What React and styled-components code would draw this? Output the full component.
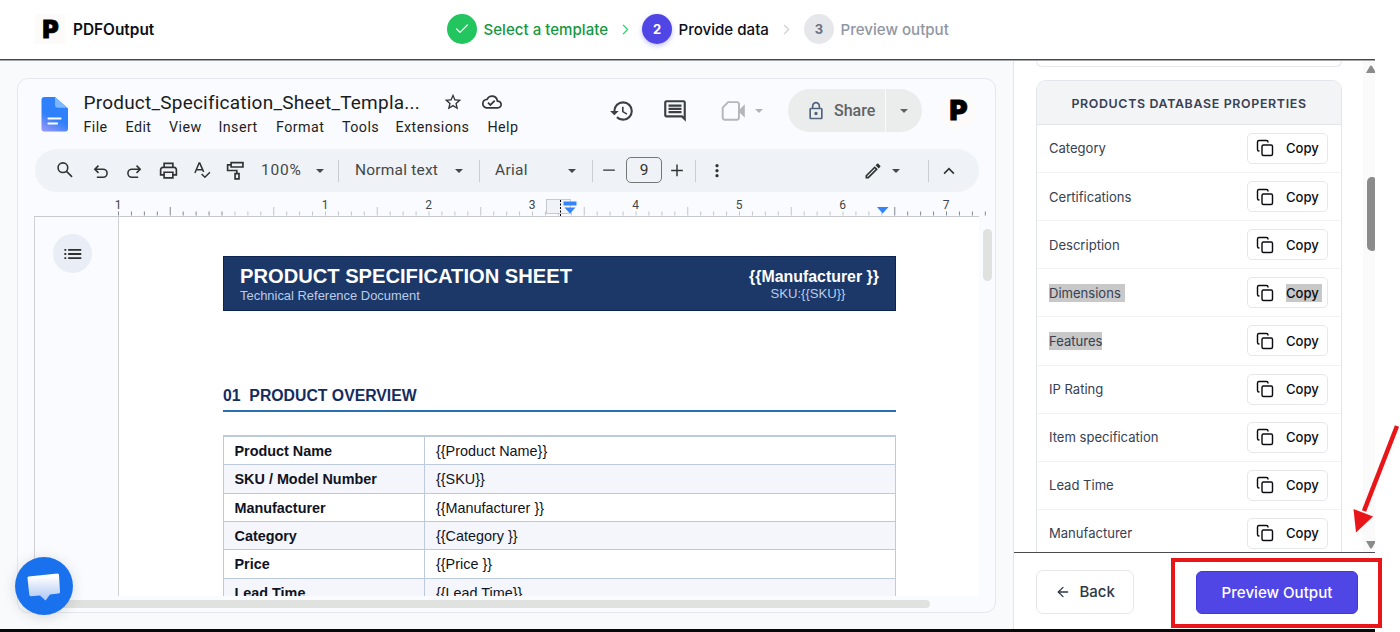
import React, { Fragment } from "react"
import styled, { createGlobalStyle } from "styled-components"
import { ArrowLeft, Check, ChevronRight, Copy } from "lucide-react"
import {
  MdHistory,
  MdOutlineCloudDone,
  MdOutlineComment,
  MdOutlineEdit,
  MdOutlineLock,
  MdStarBorder,
} from "react-icons/md"

const GlobalStyle = createGlobalStyle`
  * {
    box-sizing: border-box;
  }

  body {
    margin: 0;
    overflow: hidden;
    background: #fff;
    font-family: Inter, "Liberation Sans", sans-serif;
  }
`

const Page = styled.div`
  position: relative;
  width: 1400px;
  height: 632px;
  overflow: hidden;
`

const Shell = styled.div`
  display: flex;
  flex-direction: column;
  width: 1375px;
  height: 632px;
  border-bottom: 3px solid #08080a;
`

/* ---------- header ---------- */

const Header = styled.header`
  display: flex;
  align-items: center;
  flex: none;
  height: 61px;
  padding: 0 0 2px 35px;
  border-bottom: 1px solid #a5a6a8;
  box-shadow: inset 0 -1px 0 #46474b;
`

const Brand = styled.div`
  display: flex;
  align-items: center;
  width: 412px;
  font-size: 15.4px;
  font-weight: 600;
  color: #0b0f19;
`

const Logo = styled.div`
  display: flex;
  align-items: center;
  justify-content: center;
  width: ${props => props.size}px;
  height: ${props => props.size}px;
  padding: 1px 0 0 1px;
  border-radius: ${props => (props.round ? "50%" : "0")};
  background: #fcfbf9;
  color: #000;
  font: 900 ${props => props.glyph}px/1 Inter, sans-serif;
  -webkit-text-stroke: 0.9px #000;
`

const BrandName = styled.span`
  margin-left: 8px;
`

const Steps = styled.div`
  display: flex;
  align-items: center;
  font-size: 15.1px;
  font-weight: 500;

  > svg {
    flex: none;
  }
`

const StepDot = styled.div`
  display: flex;
  align-items: center;
  justify-content: center;
  flex: none;
  width: 30px;
  height: 30px;
  border-radius: 50%;
  background: ${props => props.bg};
  color: ${props => props.ink};
  font-size: 13px;
  font-weight: 700;
  box-shadow: ${props => (props.active ? "0 2px 5px #c3c1f8" : "none")};
`

const StepName = styled.span`
  width: ${props => props.width}px;
  margin-left: 6.5px;
  color: ${props => props.ink};
  white-space: nowrap;
`

/* ---------- document pane ---------- */

const Body = styled.main`
  display: flex;
  flex: 1;
  min-height: 0;
`

const DocPane = styled.section`
  width: 1014px;
  padding: 17px 17px 0;
  background: #f9fafc;
  border-right: 1px solid #e3e5e9;
`

const DocCard = styled.div`
  display: flex;
  flex-direction: column;
  width: 979px;
  height: 535px;
  border: 1px solid #e4e7eb;
  border-radius: 11px;
  background: #f9fbfe;
  overflow: hidden;
  font-family: Roboto, "Liberation Sans", sans-serif;
`

const DocHead = styled.div`
  display: flex;
  flex: none;
  height: 70px;
  padding-left: 23px;
`

const DocIcon = styled.svg`
  display: block;
  flex: none;
  margin-top: 18px;
`

const DocTitles = styled.div`
  flex: none;
  width: 523px;
  padding-left: 15.5px;
  color: #1b1c1e;
`

const TitleRow = styled.div`
  display: flex;
  align-items: center;
  height: 26px;
  margin-top: 10px;
`

const DocTitle = styled.span`
  width: 359px;
  font-size: 19px;
  letter-spacing: 0.22px;
  white-space: nowrap;
`

const CloudSlot = styled.span`
  display: flex;
  margin-left: 19px;
`

const Menus = styled.div`
  display: flex;
  margin-top: 1px;
  font-size: 14.3px;
  line-height: 22px;
  color: #1f1f1f;
`

const MenuItem = styled.span`
  width: ${props => props.width}px;
  white-space: nowrap;
  letter-spacing: 0.42px;
`

const HeadTools = styled.div`
  display: flex;
  align-items: center;
  flex: none;
  height: 63px;
  color: #3c4043;
`

const ToolSlot = styled.div`
  display: flex;
  align-items: center;
  justify-content: ${props => (props.start ? "flex-start" : "center")};
  flex: none;
  width: ${props => props.width}px;
  padding-left: ${props => props.inset || 0}px;
  white-space: nowrap;

  svg {
    flex: none;
  }
`

const Caret = styled.span`
  width: 0;
  height: 0;
  border: 4.5px solid transparent;
  border-top-color: ${props => props.ink || "#444746"};
  border-bottom: 0;
`

const ShareButton = styled.div`
  display: flex;
  align-items: center;
  width: 134px;
  height: 43px;
  margin-left: 25px;
  border-radius: 22px;
  background: #ebecec;
  color: #5f6368;
  font-size: 16px;
  font-weight: 500;
`

const ShareMain = styled.div`
  display: flex;
  align-items: center;
  gap: 8px;
  width: 98px;
  height: 43px;
  padding-left: 18px;
  border-right: 1px solid #f9fbfe;
`

const Toolbar = styled.div`
  display: flex;
  align-items: center;
  flex: none;
  width: 944px;
  height: 43px;
  margin-left: 17px;
  padding-left: 11px;
  border-radius: 22px;
  background: #eff3f8;
  color: #303332;
  font-size: 15.5px;
`

const ToolLabel = styled(ToolSlot)`
  justify-content: flex-start;
  padding-bottom: 2px;
  color: #444746;
  letter-spacing: ${props => props.spacing || 0}px;
`

const Rule = styled.span`
  flex: none;
  width: 1px;
  height: 22px;
  background: #c9ccd0;
`

const SizeBox = styled.span`
  display: flex;
  align-items: center;
  justify-content: center;
  flex: none;
  width: 36px;
  height: 26px;
  margin-bottom: 2px;
  border: 1px solid #747775;
  border-radius: 5px;
`

const Ruler = styled.svg`
  display: block;
  flex: none;
  margin-left: 16px;
  font: 12px Roboto, sans-serif;
  fill: #444746;
`

const Workspace = styled.div`
  display: flex;
  flex: none;
  height: 379px;
  margin-left: 16px;
`

const OutlineRail = styled.div`
  width: 84px;
  padding: 17px 0 0 18px;
  border-left: 1px solid #cfd1d4;
`

const OutlineButton = styled.div`
  display: flex;
  align-items: center;
  justify-content: center;
  width: 39px;
  height: 39px;
  border-radius: 50%;
  background: #e9eef6;
  color: #2c2f2e;
`

const Paper = styled.div`
  width: 861px;
  height: 379px;
  padding: 39px 0 0 104px;
  overflow: hidden;
  border-left: 1px solid #cfd1d4;
  background: #fff;
  font-family: "Liberation Sans", Arial, sans-serif;
`

const ScrollY = styled.div`
  width: 9px;
  height: 52px;
  margin: 12px 0 0 4px;
  border-radius: 5px;
  background: #e0e2e0;
`

const ScrollX = styled.div`
  flex: none;
  width: 895px;
  height: 8px;
  margin: 4px 0 0 17px;
  border-radius: 4px;
  background: #e0e2e0;
`

const Banner = styled.div`
  display: flex;
  justify-content: space-between;
  width: 673px;
  height: 55px;
  padding: 8px 16px 0;
  border: 1px solid #0d2352;
  background: #1b3869;
  color: #fff;
`

const BannerTitle = styled.div`
  font-size: 20.15px;
  font-weight: 700;
  line-height: 23px;
  white-space: nowrap;
`

const BannerSub = styled.div`
  font-size: 12.95px;
  line-height: 15px;
  color: #bccce6;
`

const BannerRight = styled.div`
  width: 130px;
  text-align: center;
  white-space: nowrap;
  font-size: 15.9px;
  font-weight: 700;
  line-height: 23px;

  ${BannerSub} {
    margin-top: -2px;
    padding-right: 12px;
    font-size: 13.1px;
    font-weight: 400;
  }
`

const SectionTitle = styled.h2`
  width: 673px;
  margin: 75px 0 23px;
  padding-bottom: 5px;
  border-bottom: 2px solid #2a6fb0;
  color: #152c61;
  font-size: 15.8px;
  font-weight: 700;
  line-height: 19px;
  white-space: pre;
`

const SpecTable = styled.div`
  width: 673px;
  border: 1px solid #bccadc;
  border-top-width: 2px;
`

const SpecRow = styled.div`
  display: grid;
  grid-template-columns: 201px 1fr;
  height: 28.35px;
  border-bottom: 1px solid #bccadc;
  background: ${props => (props.shaded ? "#f4f6fb" : "#fff")};
  font-size: 14.4px;
  line-height: 28.5px;
  color: #101323;
`

const SpecName = styled.div`
  padding-left: 10.5px;
  border-right: 1px solid #bccadc;
  font-weight: 700;
`

const SpecValue = styled.div`
  padding-left: 11px;
`

/* ---------- properties pane ---------- */

const SidePane = styled.aside`
  display: flex;
  flex-direction: column;
  width: 361px;
`

const SideScroll = styled.div`
  display: flex;
  justify-content: space-between;
  height: 492px;
  overflow: hidden;
  border-bottom: 1px solid #4b4c50;
`

const Cards = styled.div`
  width: 306px;
  margin-left: 22px;
`

const PrevCard = styled.div`
  height: 6px;
  border: 1px solid #e5e7eb;
  border-top: 0;
  border-radius: 0 0 8px 8px;
`

const PropsCard = styled.div`
  margin-top: 13px;
  border: 1px solid #e2e5ea;
  border-radius: 10px 10px 0 0;
`

const PropsTitle = styled.div`
  height: 43.8px;
  border-bottom: 1px solid #e2e5ea;
  border-radius: 9px 9px 0 0;
  background: #f3f4f6;
  color: #374151;
  font-size: 12.4px;
  font-weight: 600;
  line-height: 46px;
  letter-spacing: 0.66px;
  text-align: center;
`

const PropRow = styled.div`
  display: flex;
  align-items: center;
  justify-content: space-between;
  height: 48.15px;
  padding: 0 13px 0 12px;
  border-bottom: 1px solid #f1f2f5;
  color: #374151;
  font-size: 13.05px;
`

const Mark = styled.span`
  padding-right: ${props => props.trail || 0}px;
  line-height: 18px;
  background: ${props => (props.on ? "#c8c8c8" : "none")};
`

const CopyButton = styled.div`
  display: flex;
  align-items: center;
  width: 81px;
  height: 31px;
  padding-left: 8px;
  border: 1px solid #e5e7eb;
  border-radius: 5px;
  background: #fff;
  color: #0b0c10;
  font-weight: 500;

  svg {
    margin-right: 12px;
  }
`

const PaneScrollbar = styled.div`
  display: flex;
  flex-direction: column;
  align-items: flex-end;
  width: 12px;
  background: #fafafa;
`

const ScrollArrow = styled.svg`
  flex: none;
  margin-top: ${props => props.gap}px;
`

const ScrollThumb = styled.div`
  flex: none;
  width: 8px;
  height: 74px;
  margin-top: 104px;
  border-radius: 5px 2px 2px 5px;
  background: #8b8b8b;
`

const SideFooter = styled.div`
  display: flex;
  justify-content: space-between;
  padding: 17px 17px 0 22px;
`

const BackButton = styled.div`
  display: flex;
  align-items: center;
  gap: 8.5px;
  width: 98px;
  height: 44px;
  padding: 0 0 1px 18px;
  border: 1px solid #e5e7eb;
  border-radius: 7px;
  color: #2d3748;
  font-size: 15px;
  font-weight: 500;
`

const PreviewButton = styled.div`
  width: 162px;
  height: 43px;
  margin-top: 0.5px;
  border: 1px solid #4038dc;
  border-radius: 6px;
  background: #4f46e5;
  color: #fff;
  font-size: 15.1px;
  font-weight: 500;
  line-height: 41px;
  text-align: center;
`

/* ---------- overlays ---------- */

const ChatBubble = styled.div`
  position: absolute;
  left: 15px;
  top: 557px;
  width: 58px;
  height: 58px;
  border-radius: 50%;
  background: #1a71ee;
  box-shadow: 0 2px 14px rgba(0, 0, 0, 0.14);
`

const Callout = styled.div`
  position: absolute;
  left: 1171px;
  top: 558px;
  width: 211px;
  height: 70px;
  border: 4.5px solid #e81519;
`

const CalloutArrow = styled.svg`
  position: absolute;
  left: 1345px;
  top: 420px;
`

const menus = [
  ["File", 42],
  ["Edit", 43.5],
  ["View", 49.5],
  ["Insert", 57.5],
  ["Format", 66],
  ["Tools", 53.5],
  ["Extensions", 92],
  ["Help", 40],
]

const specs = [
  ["Product Name", "{{Product Name}}"],
  ["SKU / Model Number", "{{SKU}}"],
  ["Manufacturer", "{{Manufacturer }}"],
  ["Category", "{{Category }}"],
  ["Price", "{{Price }}"],
  ["Lead Time", "{{Lead Time}}"],
]

const properties = [
  { name: "Category" },
  { name: "Certifications" },
  { name: "Description" },
  { name: "Dimensions", marked: true, trail: 4, copyMarked: true },
  { name: "Features", marked: true },
  { name: "IP Rating" },
  { name: "Item specification" },
  { name: "Lead Time" },
  { name: "Manufacturer" },
]

// Outline icon on a 24 unit grid
const LineIcon = ({ size = 20, weight = 2, children }) => (
  <svg
    width={size}
    height={size}
    viewBox="0 0 24 24"
    fill="none"
    stroke="currentColor"
    strokeWidth={weight}
  >
    {children}
  </svg>
)

const INCH = 103.5
const RULER_ZERO = 188

const DocRuler = () => {
  const ticks = Array.from({ length: 68 }, (_, i) => i)
  const labels = [-1, 1, 2, 3, 4, 5, 6, 7]

  return (
    <Ruler width="955" height="25" viewBox="0 0 955 25">
      {ticks.map(i => {
        const x = RULER_ZERO - INCH + (i * INCH) / 8
        return (
          <line
            key={i}
            x1={x}
            x2={x}
            y1={i % 8 === 4 ? 15 : 19.5}
            y2="23.5"
            stroke={i <= 8 || i >= 60 ? "#85888b" : "#c2c5c8"}
          />
        )
      })}
      <path d="M0 24.5H945" stroke="#c7c9cc" />
      {labels.map(n => (
        <text key={n} x={RULER_ZERO + n * INCH - 0.5} y="17" textAnchor="middle">
          {Math.abs(n)}
        </text>
      ))}
      <rect x="512.5" y="7.5" width="24" height="14" fill="#f0f3f7" stroke="#c7c9cc" />
      <path d="M526.5 8V24" stroke="#000" strokeDasharray="2 1.5" />
      <path d="M529.5 9.5H542.5V13.5H529.5ZM530.5 15.5H541.5L536 21.5Z" fill="#3483fa" />
      <path d="M843 15H854.5L848.7 21.5Z" fill="#3483fa" />
    </Ruler>
  )
}

const StepHeader = () => (
  <Header>
    <Brand>
      <Logo size={30} glyph={24.5}>
        P
      </Logo>
      <BrandName>PDFOutput</BrandName>
    </Brand>
    <Steps>
      <StepDot bg="#22c55e" ink="#fff">
        <Check size={16} strokeWidth={1.8} />
      </StepDot>
      <StepName width={133} ink="#15983f">
        Select a template
      </StepName>
      <ChevronRight size={17} strokeWidth={1.7} color="#3ccb72" />
      <StepDot bg="#4f46e5" ink="#fff" active style={{ marginLeft: 8.5 }}>
        2
      </StepDot>
      <StepName width={99.5} ink="#0b0f19">
        Provide data
      </StepName>
      <ChevronRight size={17} strokeWidth={1.7} color="#cdd1d7" />
      <StepDot bg="#e5e7eb" ink="#6b7280" style={{ marginLeft: 9 }}>
        3
      </StepDot>
      <StepName width={110} ink="#9096a3">
        Preview output
      </StepName>
    </Steps>
  </Header>
)

const DocHeader = () => (
  <DocHead>
    <DocIcon width="27" height="35" viewBox="0 0 27 35">
      <defs>
        <linearGradient id="doc" x1="0.7" y1="0" x2="0.3" y2="1">
          <stop offset="0.6" stopColor="#2f80fb" />
          <stop offset="1" stopColor="#8a94fa" />
        </linearGradient>
      </defs>
      <path
        d="M3.5 0H14L27 11.5V31.5a3 3 0 0 1-3 3H3.5a3 3 0 0 1-3-3V3a3 3 0 0 1 3-3Z"
        fill="url(#doc)"
      />
      <path d="M14 0L26.5 10.8H17a3 3 0 0 1-3-3Z" fill="#7db8ff" />
      <path d="M7.5 21.5H19.5M7.5 26.5H16" stroke="#fff" strokeWidth="2.2" strokeLinecap="round" />
    </DocIcon>
    <DocTitles>
      <TitleRow>
        <DocTitle>Product_Specification_Sheet_Templa...</DocTitle>
        <MdStarBorder size={20} color="#333638" />
        <CloudSlot>
          <MdOutlineCloudDone size={20} color="#333638" />
        </CloudSlot>
      </TitleRow>
      <Menus>
        {menus.map(([name, width]) => (
          <MenuItem key={name} width={width}>
            {name}
          </MenuItem>
        ))}
      </Menus>
    </DocTitles>
    <HeadTools>
      <ToolSlot width={62}>
        <MdHistory size={26} />
      </ToolSlot>
      <ToolSlot width={44}>
        <MdOutlineComment size={26} />
      </ToolSlot>
      <ToolSlot width={58} inset={14} style={{ color: "#b4b6b8" }}>
        <LineIcon size={26} weight={1.8}>
          <path d="M7.5 3.8H15.5a2 2 0 0 1 2 2V18a2 2 0 0 1-2 2H4.5a2 2 0 0 1-2-2V8.8Z" />
          <path d="M18 12L22 8V16Z" fill="currentColor" />
        </LineIcon>
      </ToolSlot>
      <Caret ink="#b0b2b4" />
      <ShareButton>
        <ShareMain>
          <MdOutlineLock size={20} color="#50657d" />
          Share
        </ShareMain>
        <ToolSlot width={36}>
          <Caret ink="#5f6368" />
        </ToolSlot>
      </ShareButton>
      <ToolSlot width={72}>
        <Logo size={36} glyph={27.5} round>
          P
        </Logo>
      </ToolSlot>
    </HeadTools>
  </DocHead>
)

const DocToolbar = () => (
  <Toolbar>
    <ToolSlot width={37}>
      <LineIcon size={20} weight={1.9}>
        <circle cx="9.5" cy="8" r="5.8" />
        <path d="M13.8 12.4L20.5 19" />
      </LineIcon>
    </ToolSlot>
    <ToolSlot width={34} inset={1}>
      <LineIcon size={20} weight={1.9}>
        <path d="M7 19.5H14.5a4.8 4.8 0 0 0 0-9.6H5M9 5.5L4.6 9.9L9 14.3" />
      </LineIcon>
    </ToolSlot>
    <ToolSlot width={34}>
      <LineIcon size={20} weight={1.9}>
        <path d="M17 19.5H9.5a4.8 4.8 0 0 1 0-9.6H19M15 5.5L19.4 9.9L15 14.3" />
      </LineIcon>
    </ToolSlot>
    <ToolSlot width={34}>
      <LineIcon size={21} weight={1.9}>
        <path d="M7 8.5V3.8H17V8.5M7 17H3V11a2.5 2.5 0 0 1 2.5-2.5H18.5A2.5 2.5 0 0 1 21 11V17H17M7 14H17V20.5H7Z" />
      </LineIcon>
    </ToolSlot>
    <ToolSlot width={33}>
      <LineIcon size={20} weight={1.8}>
        <path d="M3.5 14.5L8.5 2.5H9.3L14 13M5.5 10.5H12.5M11.5 15.5L15.5 19.5L21.5 13.5" />
      </LineIcon>
    </ToolSlot>
    <ToolSlot width={34}>
      <LineIcon size={21} weight={1.9}>
        <path d="M7 3H20.5V8H7ZM7 5.5H3V12H13.5V15.5M11.5 15.5H16V21.5H11.5Z" />
      </LineIcon>
    </ToolSlot>
    <ToolLabel width={62} spacing={0.8} inset={9}>
      100%
    </ToolLabel>
    <ToolSlot width={11}>
      <Caret />
    </ToolSlot>
    <ToolSlot width={26}>
      <Rule />
    </ToolSlot>
    <ToolLabel width={102} spacing={0.2} inset={4}>
      Normal text
    </ToolLabel>
    <ToolSlot width={11}>
      <Caret />
    </ToolSlot>
    <ToolSlot width={30}>
      <Rule />
    </ToolSlot>
    <ToolLabel width={73} spacing={0.3} inset={1}>
      Arial
    </ToolLabel>
    <ToolSlot width={9}>
      <Caret />
    </ToolSlot>
    <ToolSlot width={25} inset={7}>
      <Rule />
    </ToolSlot>
    <ToolSlot width={25} inset={1} start>
      <LineIcon size={14} weight={2.5}>
        <path d="M2 10.5H22" />
      </LineIcon>
    </ToolSlot>
    <SizeBox>9</SizeBox>
    <ToolSlot width={30}>
      <LineIcon size={14} weight={2.5}>
        <path d="M2 11H22M12 1V21" />
      </LineIcon>
    </ToolSlot>
    <ToolSlot width={7}>
      <Rule />
    </ToolSlot>
    <ToolSlot width={35}>
      <LineIcon size={16}>
        <g fill="currentColor" stroke="none">
          <circle cx="12" cy="4" r="2.4" />
          <circle cx="12" cy="11.5" r="2.4" />
          <circle cx="12" cy="19" r="2.4" />
        </g>
      </LineIcon>
    </ToolSlot>
    <ToolSlot width={148} inset={129} start>
      <MdOutlineEdit size={20} />
    </ToolSlot>
    <ToolSlot width={28}>
      <Caret />
    </ToolSlot>
    <ToolSlot width={36}>
      <Rule />
    </ToolSlot>
    <ToolSlot width={6}>
      <LineIcon size={18} weight={2.2}>
        <path d="M5.5 15.5L12 9L18.5 15.5" />
      </LineIcon>
    </ToolSlot>
  </Toolbar>
)

const DocPaper = () => (
  <Paper>
    <Banner>
      <div>
        <BannerTitle>PRODUCT SPECIFICATION SHEET</BannerTitle>
        <BannerSub>Technical Reference Document</BannerSub>
      </div>
      <BannerRight>
        {"{{Manufacturer }}"}
        <BannerSub>{"SKU:{{SKU}}"}</BannerSub>
      </BannerRight>
    </Banner>
    <SectionTitle>{"01  PRODUCT OVERVIEW"}</SectionTitle>
    <SpecTable>
      {specs.map(([name, value], index) => (
        <SpecRow key={name} shaded={index % 2 ? 1 : 0}>
          <SpecName>{name}</SpecName>
          <SpecValue>{value}</SpecValue>
        </SpecRow>
      ))}
    </SpecTable>
  </Paper>
)

const PropertiesPane = () => (
  <SidePane>
    <SideScroll>
      <Cards>
        <PrevCard />
        <PropsCard>
          <PropsTitle>PRODUCTS DATABASE PROPERTIES</PropsTitle>
          {properties.map(item => (
            <PropRow key={item.name}>
              <Mark on={item.marked ? 1 : 0} trail={item.trail}>
                {item.name}
              </Mark>
              <CopyButton>
                <Copy size={18} strokeWidth={1.9} />
                <Mark on={item.copyMarked ? 1 : 0} trail={3}>
                  Copy
                </Mark>
              </CopyButton>
            </PropRow>
          ))}
        </PropsCard>
      </Cards>
      <PaneScrollbar>
        <ScrollArrow gap={4} width="9" height="8">
          <path d="M0 8L4 1Q5 0 6 1L9 6V8Z" fill="#8b8b8b" />
        </ScrollArrow>
        <ScrollThumb />
        <ScrollArrow gap={290} width="9" height="8">
          <path d="M0 0L4 7Q5 8 6 7L9 2V0Z" fill="#8b8b8b" />
        </ScrollArrow>
      </PaneScrollbar>
    </SideScroll>
    <SideFooter>
      <BackButton>
        <ArrowLeft size={16} strokeWidth={1.9} />
        Back
      </BackButton>
      <PreviewButton>Preview Output</PreviewButton>
    </SideFooter>
  </SidePane>
)

const App = () => (
  <Fragment>
    <GlobalStyle />
    <Page>
      <Shell>
        <StepHeader />
        <Body>
          <DocPane>
            <DocCard>
              <DocHeader />
              <DocToolbar />
              <DocRuler />
              <Workspace>
                <OutlineRail>
                  <OutlineButton>
                    <LineIcon size={18} weight={2.4}>
                      <path d="M0.5 6.5H3M0.5 12H3M0.5 17.5H3M5.5 6.5H23M5.5 12H23M5.5 17.5H23" />
                    </LineIcon>
                  </OutlineButton>
                </OutlineRail>
                <DocPaper />
                <ScrollY />
              </Workspace>
              <ScrollX />
            </DocCard>
          </DocPane>
          <PropertiesPane />
        </Body>
      </Shell>
      <ChatBubble>
        <svg width="58" height="58" viewBox="0 0 58 58">
          <defs>
            <linearGradient id="chat" x1="0" y1="0" x2="0" y2="1">
              <stop offset="0.1" stopColor="#fff" />
              <stop offset="0.85" stopColor="#b9cff5" />
            </linearGradient>
          </defs>
          <path
            d="M13.5 19.5L42.5 16.5Q44 16.5 44 18L45 35Q45 36.5 43.5 36.6L35 37.5L30.5 43.5L25 38.5L16 39.3Q14.5 39.3 14.3 38L12.5 21Q12.4 19.7 13.5 19.5Z"
            fill="url(#chat)"
          />
        </svg>
      </ChatBubble>
      <Callout />
      <CalloutArrow width="55" height="115" viewBox="0 0 55 115">
        <path d="M52 6L19 91" stroke="#e81519" strokeWidth="4.5" />
        <path d="M8.5 89L28 96.5L11 112.5Z" fill="#e81519" />
      </CalloutArrow>
    </Page>
  </Fragment>
)

export default App
